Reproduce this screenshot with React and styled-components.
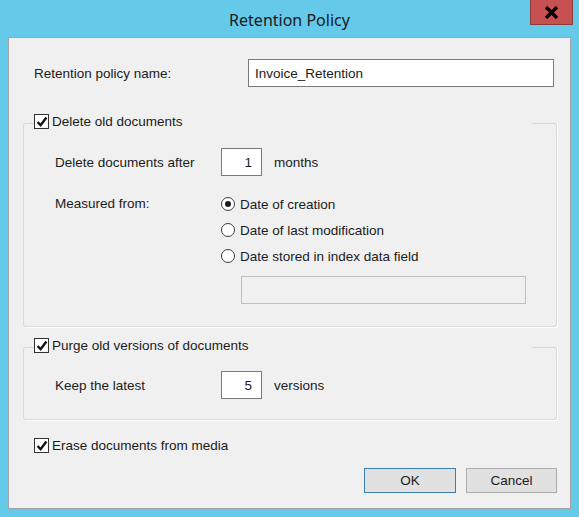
import { useState } from 'react'
import styled, { createGlobalStyle } from 'styled-components'

const GlobalStyle = createGlobalStyle`
  html, body {
    margin: 0;
    padding: 0;
    background: #65c9ea;
  }
  * {
    box-sizing: border-box;
  }
`

const Window = styled.div`
  width: 579px;
  height: 517px;
  background: #65c9ea;
  display: flex;
  flex-direction: column;
  font-family: 'Liberation Sans', Arial, sans-serif;
  font-size: 13.5px;
  color: #1b1b1b;
`

const TitleBar = styled.div`
  height: 37px;
  display: grid;
  grid-template-columns: 1fr auto 1fr;
`

const Title = styled.div`
  grid-column: 2;
  font-family: 'Noto Sans', 'Open Sans', sans-serif;
  font-size: 16px;
  line-height: 37px;
  padding-top: 2px;
  color: #1a1a1a;
`

const CloseButton = styled.button`
  grid-column: 3;
  justify-self: end;
  align-self: start;
  margin-right: 6px;
  width: 43px;
  height: 25px;
  padding: 0;
  border: 1px solid #8c3b3b;
  border-top: none;
  background: #c75050;
  display: flex;
  align-items: center;
  justify-content: center;
`

const Client = styled.div`
  margin: 0 8px;
  height: 472px;
  background: #f0f0f0;
  border: 1px solid #a3a3a3;
  padding: 0 13px 0 14px;
  display: flex;
  flex-direction: column;
`

const NameRow = styled.div`
  margin-top: 21px;
  display: flex;
  align-items: center;
  height: 28px;
`

const NameLabel = styled.span`
  padding-left: 11px;
  width: 225px;
`

const TextBox = styled.input`
  width: ${props => props.$width}px;
  height: 28px;
  border: 1px solid ${props => props.$disabled ? '#bfbfbf' : '#7a7a7a'};
  background: ${props => props.$disabled ? '#f0f0f0' : '#fff'};
  font: inherit;
  color: inherit;
  padding: 0 ${props => props.$right ? '9px' : '6px'};
  text-align: ${props => props.$right ? 'right' : 'left'};
  outline: none;
  margin: 0;
`

// group box: the top edge is drawn by two short pieces either side of the heading
const GroupFrame = styled.section`
  margin-top: ${props => props.$top}px;
  display: flex;
  flex-direction: column;
`

const GroupTop = styled.div`
  display: flex;
  height: 18px;
`

const EdgePiece = styled.span`
  flex: ${props => props.$side === 'left' ? '0 0 11px' : '1'};
  margin-top: 9px;
  border-top: 1px solid #d9d9d9;
  ${props => props.$side === 'left'
    ? 'border-left: 1px solid #d9d9d9; border-top-left-radius: 3px;'
    : 'border-right: 1px solid #d9d9d9; border-top-right-radius: 3px; box-shadow: 1px 0 0 #fff;'}
`

const GroupBody = styled.div`
  border: 1px solid #d9d9d9;
  border-top: none;
  border-radius: 0 0 3px 3px;
  box-shadow: 1px 1px 0 #fff;
  padding: 0 0 ${props => props.$bottom}px 31px;
`

const CheckRow = styled.label`
  display: flex;
  align-items: center;
  gap: 3px;
  width: ${props => props.$width ? `${props.$width}px` : 'auto'};
  height: 15px;
  padding-left: ${props => props.$indent || 0}px;
  margin-top: ${props => props.$top || 0}px;
  white-space: nowrap;
`

const Box = styled.span`
  width: 15px;
  height: 15px;
  flex: none;
  border: 1px solid #333;
  background: #fff;
  display: flex;
  align-items: center;
  justify-content: center;
`

const FieldRow = styled.div`
  display: flex;
  align-items: center;
  height: 28px;
  margin-top: ${props => props.$top}px;
`

const FieldLabel = styled.span`
  width: 166px;
  flex: none;
`

const Unit = styled.span`
  margin-left: 12px;
`

const MeasuredBlock = styled.div`
  display: grid;
  grid-template-columns: 166px 1fr;
  margin-top: 15px;
`

const MeasuredLabel = styled.span`
  height: 26px;
  line-height: 26px;
`

const RadioList = styled.div`
  display: flex;
  flex-direction: column;
`

const RadioRow = styled.label`
  display: flex;
  align-items: center;
  gap: 5px;
  height: 26px;
  white-space: nowrap;
`

const RadioDot = styled.span`
  width: 14px;
  height: 14px;
  border-radius: 50%;
  border: 1px solid #3d3d3d;
  background: #fff;
  flex: none;
  display: flex;
  align-items: center;
  justify-content: center;
  &::after {
    content: '';
    width: 6px;
    height: 6px;
    border-radius: 50%;
    background: ${props => props.$on ? '#1a1a1a' : 'transparent'};
  }
`

const IndexField = styled.div`
  margin: 7px 0 0 20px;
`

const ButtonRow = styled.div`
  margin-top: 15px;
  display: flex;
  justify-content: flex-end;
  gap: 10px;
`

const Button = styled.button`
  width: ${props => props.$width}px;
  height: 25px;
  background: #e1e1e1;
  border: 1px solid ${props => props.$primary ? '#3c7fb1' : '#adadad'};
  font: inherit;
  color: inherit;
  padding: 0;
`

const Check = ({ checked, onToggle, children, indent, top, width }) => (
  <CheckRow $indent={indent} $top={top} $width={width} onClick={onToggle}>
    <Box>
      {checked && (
        <svg width='12' height='12' viewBox='0 0 12 12'>
          <path d='M1.6 6 L4.6 9.2 L10.4 1.6' fill='none' stroke='#111' strokeWidth='2.4' />
        </svg>
      )}
    </Box>
    <span>{children}</span>
  </CheckRow>
)

const Group = ({ top, bottom, title, checked, onToggle, children }) => (
  <GroupFrame $top={top}>
    <GroupTop>
      <EdgePiece $side='left' />
      <Check width={498} checked={checked} onToggle={onToggle}>{title}</Check>
      <EdgePiece $side='right' />
    </GroupTop>
    <GroupBody $bottom={bottom}>{children}</GroupBody>
  </GroupFrame>
)

const Radio = ({ on, onPick, children }) => (
  <RadioRow onClick={onPick}>
    <RadioDot $on={on} />
    <span>{children}</span>
  </RadioRow>
)

const measures = ['Date of creation', 'Date of last modification', 'Date stored in index data field']

const App = () => {
  const [name, setName] = useState('Invoice_Retention')
  const [deleteOld, setDeleteOld] = useState(true)
  const [purge, setPurge] = useState(true)
  const [erase, setErase] = useState(true)
  const [months, setMonths] = useState('1')
  const [versions, setVersions] = useState('5')
  const [measure, setMeasure] = useState(0)

  return (
    <Window>
      <GlobalStyle />
      <TitleBar>
        <Title>Retention Policy</Title>
        <CloseButton aria-label='Close'>
          <svg width='15' height='13' viewBox='0 0 15 13'>
            <path d='M2 1 L13 12 M13 1 L2 12' stroke='#000' strokeWidth='3.4' />
          </svg>
        </CloseButton>
      </TitleBar>
      <Client>
        <NameRow>
          <NameLabel>Retention policy name:</NameLabel>
          <TextBox $width={306} value={name} onChange={e => setName(e.target.value)} />
        </NameRow>

        <Group top={27} bottom={22} title='Delete old documents' checked={deleteOld} onToggle={() => setDeleteOld(!deleteOld)}>
          <FieldRow $top={16}>
            <FieldLabel>Delete documents after</FieldLabel>
            <TextBox $width={41} $right value={months} onChange={e => setMonths(e.target.value)} />
            <Unit>months</Unit>
          </FieldRow>
          <MeasuredBlock>
            <MeasuredLabel>Measured from:</MeasuredLabel>
            <RadioList>
              {measures.map((m, i) => (
                <Radio key={m} on={measure === i} onPick={() => setMeasure(i)}>{m}</Radio>
              ))}
              <IndexField>
                <TextBox $width={285} $disabled disabled />
              </IndexField>
            </RadioList>
          </MeasuredBlock>
        </Group>

        <Group top={11} bottom={20} title='Purge old versions of documents' checked={purge} onToggle={() => setPurge(!purge)}>
          <FieldRow $top={15}>
            <FieldLabel>Keep the latest</FieldLabel>
            <TextBox $width={41} $right value={versions} onChange={e => setVersions(e.target.value)} />
            <Unit>versions</Unit>
          </FieldRow>
        </Group>

        <Check checked={erase} onToggle={() => setErase(!erase)} indent={11} top={18}>Erase documents from media</Check>

        <ButtonRow>
          <Button $width={92} $primary>OK</Button>
          <Button $width={91}>Cancel</Button>
        </ButtonRow>
      </Client>
    </Window>
  )
}

export default App
